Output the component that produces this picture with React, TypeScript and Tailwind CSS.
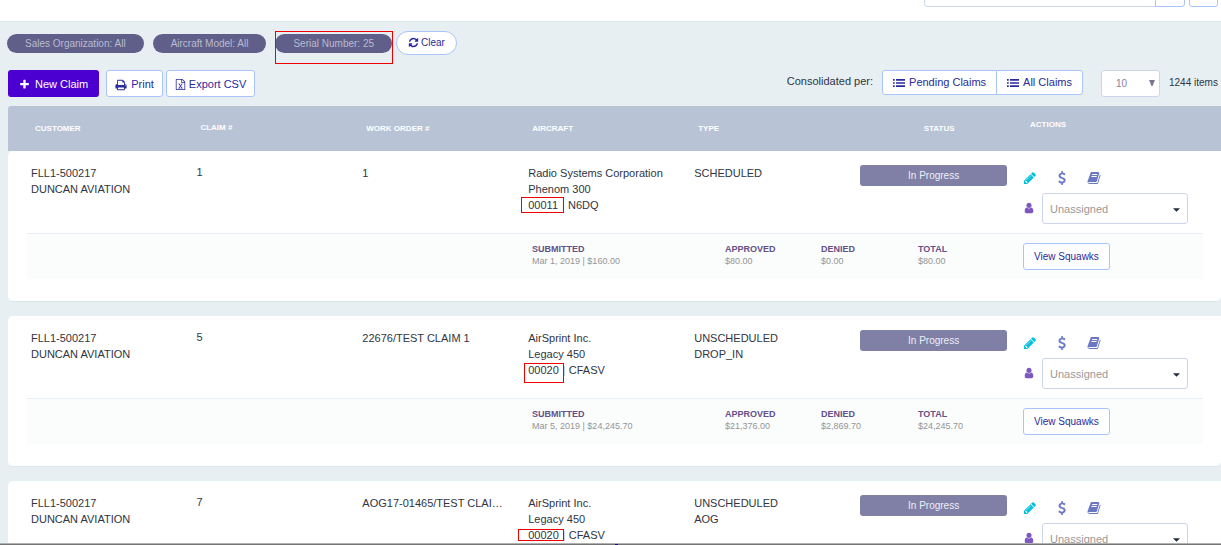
import type { ReactNode } from "react";

const ICONS = {
  plus: "M1600 736v192q0 40-28 68t-68 28h-416v416q0 40-28 68t-68 28h-192q-40 0-68-28t-28-68v-416h-416q-40 0-68-28t-28-68v-192q0-40 28-68t68-28h416v-416q0-40 28-68t68-28h192q40 0 68 28t28 68v416h416q40 0 68 28t28 68z",
  print:
    "M448 1536h896v-256h-896v256zm0-640h896v-384h-160q-40 0-68-28t-28-68v-160h-640v640zm1152 64q0-26-19-45t-45-19-45 19-19 45 19 45 45 19 45-19 19-45zm128 0v416q0 13-9.5 22.5t-22.5 9.5h-224v160q0 40-28 68t-68 28h-960q-40 0-68-28t-28-68v-160h-224q-13 0-22.5-9.5t-9.5-22.5v-416q0-79 56.5-135.5t135.5-56.5h64v-544q0-40 28-68t68-28h672q40 0 88 20t76 48l152 152q28 28 48 76t20 88v256h64q79 0 135.5 56.5t56.5 135.5z",
  refresh:
    "M1639 1056q0 5-1 7-64 268-268 434.5t-478 166.5q-146 0-282.5-55t-243.5-157l-129 129q-19 19-45 19t-45-19-19-45v-448q0-26 19-45t45-19h448q26 0 45 19t19 45-19 45l-137 137q71 66 161 102t187 36q134 0 250-65t186-179q11-17 53-117 8-23 30-23h192q13 0 22.5 9.5t9.5 22.5zm25-800v448q0 26-19 45t-45 19h-448q-26 0-45-19t-19-45 19-45l138-138q-148-137-349-137-134 0-250 65t-186 179q-11 17-53 117-8 23-30 23h-199q-13 0-22.5-9.5t-9.5-22.5v-7q65-268 270-434.5t480-166.5q146 0 284 55.5t245 156.5l130-129q19-19 45-19t45 19 19 45z",
  excel:
    "M1596 380q28 28 48 76t20 88v1152q0 40-28 68t-68 28h-1344q-40 0-68-28t-28-68v-1600q0-40 28-68t68-28h896q40 0 88 20t76 48zm-444-244v376h376q-10-29-22-41l-313-313q-12-12-41-22zm384 1528v-1024h-416q-40 0-68-28t-28-68v-416h-768v1536h1280zm-979-234v106h281v-106h-75l103-161q5-7 10-16.5t7.5-13.5 3.5-4h2q1 4 5 10 2 4 4.5 7.5t6 8 6.5 8.5l107 161h-76v106h291v-106h-68l-192-273 195-282h67v-107h-279v107h74l-103 159q-4 7-10 16.5t-9 13.5l-2 3h-2q-1-4-5-10-6-11-17-23l-106-159h76v-107h-290v107h68l189 272-194 283h-68z",
  list: "M0 288h256v256h-256zM0 768h256v256h-256zM0 1248h256v256h-256zM448 288h1344v256h-1344zM448 768h1344v256h-1344zM448 1248h1344v256h-1344z",
  pencil:
    "M491 1536l91-91-235-235-91 91v107h128v128h107zm523-928q0-22-22-22-10 0-17 7l-542 542q-7 7-7 17 0 22 22 22 10 0 17-7l542-542q7-7 7-17zm-54-192l416 416-832 832h-416v-416zm683 96q0 53-37 90l-166 166-416-416 166-165q36-38 90-38 53 0 91 38l235 234q37 39 37 91z",
  dollar:
    "M1362 1185q0 153-99.5 263.5t-258.5 136.5v175q0 14-9 23t-23 9h-135q-13 0-22.5-9.5t-9.5-22.5v-175q-66-9-127.5-31t-101.5-44.5-74-48-46.5-37.5-17.5-18q-17-21-2-41l103-135q7-10 23-12 15-2 24 9l2 2q113 99 243 125 37 8 74 8 81 0 142.5-43t61.5-122q0-28-15-53t-33.5-42-58.5-37.5-66-32-80-32.5q-39-16-61.5-25t-61.5-26.5-62.5-31-56.5-35.5-53.5-42.5-43.5-49-35.5-58-21-66.5-8.5-78q0-138 98-242t255-134v-180q0-13 9.5-22.5t22.5-9.5h135q14 0 23 9t9 23v176q57 6 110.5 23t87 33.5 63.5 37.5 39 29 15 14q17 18 5 38l-81 146q-8 15-23 16-14 3-27-7-3-3-14.5-12t-39-26.5-58.5-32-74.5-26-85.5-11.5q-95 0-155 43t-60 111q0 26 8.5 48t29.5 41.5 39.5 33 56 31 60.5 27 70 27.5q53 20 81 31.5t76 35 75.5 42.5 62 50 53 63.5 31.5 76.5 13 94z",
  book: "M1703 478q40 57 18 129l-275 906q-19 64-76.5 107.5t-122.5 43.5h-923q-77 0-148.5-53.5t-99.5-131.5q-24-67-2-127 0-4 3-27t4-37q1-8-3-21.5t-3-19.5q2-11 8-21t16.5-23.5 16.5-23.5q23-38 45-91.5t30-91.5q3-10 .5-30t-.5-28q3-11 17-28t17-23q21-36 42-92t25-90q1-9-2.5-32t.5-28q4-13 22-30.5t22-22.5q19-26 42.5-84.5t27.5-96.5q1-8-3-25.5t-2-26.5q2-8 9-18t18-23 17-21q8-12 16.5-30.5t15-35 16-36 19.5-32 26.5-23.5 36-11.5 47.5 5.5l-1 3q38-9 51-9h761q74 0 114 56t18 130l-274 906q-36 119-71.5 153.5t-128.5 34.5h-869q-27 0-38 15-11 16-1 43 24 70 144 70h923q29 0 56-15.5t35-41.5l300-987q7-22 5-57 38 15 59 43zm-1064 2q-4 13 2 22.5t20 9.5h608q13 0 25.5-9.5t16.5-22.5l21-64q4-13-2-22.5t-20-9.5h-608q-13 0-25.5 9.5t-16.5 22.5zm-83 256q-4 13 2 22.5t20 9.5h608q13 0 25.5-9.5t16.5-22.5l21-64q4-13-2-22.5t-20-9.5h-608q-13 0-25.5 9.5t-16.5 22.5z",
  user: "M1536 1399q0 109-62.5 187t-150.5 78h-854q-88 0-150.5-78t-62.5-187q0-85 8.5-160.5t31.5-152 58.5-131 94-89 134.5-34.5q131 128 313 128t313-128q76 0 134.5 34.5t94 89 58.5 131 31.5 152 8.5 160.5zm-256-887q0 159-112.5 271.5t-271.5 112.5-271.5-112.5-112.5-271.5 112.5-271.5 271.5-112.5 271.5 112.5 112.5 271.5z",
};

function Icon({ name, className }: { name: keyof typeof ICONS; className: string }) {
  return (
    <svg viewBox="0 0 1792 1792" fill="currentColor" aria-hidden="true" className={`shrink-0 ${className}`}>
      <path d={ICONS[name]} />
    </svg>
  );
}

interface Claim {
  claim: string;
  workOrder: string;
  operator: string;
  model: string;
  serial: string;
  tail: string;
  type: string[];
  submitted: string;
  approved: string;
  denied: string;
  total: string;
  highlight: string;
}

const claims: Claim[] = [
  {
    claim: "1",
    workOrder: "1",
    operator: "Radio Systems Corporation",
    model: "Phenom 300",
    serial: "00011",
    tail: "N6DQ",
    type: ["SCHEDULED"],
    submitted: "Mar 1, 2019 | $160.00",
    approved: "$80.00",
    denied: "$0.00",
    total: "$80.00",
    highlight: "-left-[7px] top-0 h-4 w-[43px]",
  },
  {
    claim: "5",
    workOrder: "22676/TEST CLAIM 1",
    operator: "AirSprint Inc.",
    model: "Legacy 450",
    serial: "00020",
    tail: "CFASV",
    type: ["UNSCHEDULED", "DROP_IN"],
    submitted: "Mar 5, 2019 | $24,245.70",
    approved: "$21,376.00",
    denied: "$2,869.70",
    total: "$24,245.70",
    highlight: "-left-1 top-px h-5 w-10",
  },
  {
    claim: "7",
    workOrder: "AOG17-01465/TEST CLAIM 2",
    operator: "AirSprint Inc.",
    model: "Legacy 450",
    serial: "00020",
    tail: "CFASV",
    type: ["UNSCHEDULED", "AOG"],
    submitted: "Mar 5, 2019 | $24,245.70",
    approved: "$21,376.00",
    denied: "$2,869.70",
    total: "$24,245.70",
    highlight: "-left-[10px] top-[2px] h-3 w-[46px]",
  },
];

function Pill({ children }: { children: ReactNode }) {
  return (
    <span className="flex h-[19px] items-center rounded-full bg-[#5f5f8a] px-[18px] text-[10px] text-[#b9bbd0]">
      {children}
    </span>
  );
}

const outline = "flex items-center border border-[#a9c4fb] bg-white text-[#2a2a9c]";

function Figure({ label, value }: { label: string; value: string }) {
  return (
    <dl className="pb-1 text-[9px] leading-3">
      <dt className="font-bold text-[#65508a]">{label}</dt>
      <dd className="text-[#949494]">{value}</dd>
    </dl>
  );
}

function ClaimRows({ c }: { c: Claim }) {
  return (
    <tbody>
      <tr className="h-[82px] align-top text-[11px] leading-4 text-[#2f3542] *:bg-white *:px-1 *:pt-[14px]">
        <td className="rounded-tl-[5px] !pl-[23px]">
          FLL1-500217
          <br />
          DUNCAN AVIATION
        </td>
        <td className="!pt-[13px]">{c.claim}</td>
        <td>
          <div className="mr-4 truncate">{c.workOrder}</div>
        </td>
        <td>
          {c.operator}
          <br />
          {c.model}
          <br />
          <span className="flex gap-1">
            <span className="relative">
              {c.serial}
              <span className={`absolute border border-[#f00000] ${c.highlight}`} />
            </span>
            <span>
              <span className="text-[#b9bbc4]">|</span> {c.tail}
            </span>
          </span>
        </td>
        <td>
          {c.type.map((t) => (
            <div key={t}>{t}</div>
          ))}
        </td>
        <td>
          <div className="mr-[11px] flex h-[21px] items-center justify-center rounded-[3px] bg-[#8080a6] text-[10px] text-[#eeeef6]">
            In Progress
          </div>
        </td>
        <td className="!pl-px">
          <div className="flex h-7 items-center pb-[2px] text-[#6a78c4]">
            <button aria-label="Edit claim" className="w-8 text-[#00c2dc]">
              <Icon name="pencil" className="size-[14px]" />
            </button>
            <button aria-label="Payment" className="w-8">
              <Icon name="dollar" className="size-[14px]" />
            </button>
            <button aria-label="Log book">
              <Icon name="book" className="size-[14px]" />
            </button>
          </div>
          <div className="flex h-[31px] items-center">
            <Icon name="user" className="mb-[2px] mr-[7px] size-[12px] text-[#7e57c2]" />
            <div className="relative">
              <select
                aria-label="Assignee"
                className="h-[31px] w-[146px] appearance-none rounded-[3px] border border-[#cdd5ea] bg-white pl-[7px] text-[11px] text-[#999]"
              >
                <option>Unassigned</option>
              </select>
              <svg viewBox="0 0 8 4" className="pointer-events-none absolute right-2 top-[15px] h-1 w-[7px]">
                <path d="M0 0h8L4 4z" fill="#222b3a" />
              </svg>
            </div>
          </div>
        </td>
      </tr>
      <tr>
        <td colSpan={7} className="rounded-b-[5px] border-b border-[#dbe6ea] bg-white pb-[22px] pl-[19px] pr-[18px]">
          <div className="grid h-[46px] grid-cols-[505fr_193fr_96fr_97fr_105fr_180fr] items-center border-t border-[#e6edf6] bg-[#fbfdfd]">
            <span />
            <Figure label="SUBMITTED" value={c.submitted} />
            <Figure label="APPROVED" value={c.approved} />
            <Figure label="DENIED" value={c.denied} />
            <Figure label="TOTAL" value={c.total} />
            <button className={`${outline} h-[27px] justify-self-start rounded-[3px] px-[10px] text-[10px]`}>
              View Squawks
            </button>
          </div>
        </td>
      </tr>
      <tr aria-hidden="true">
        <td colSpan={7} className="h-[14px] p-0" />
      </tr>
    </tbody>
  );
}

export default function App() {
  return (
    <div className="flex h-screen flex-col overflow-hidden bg-[#e7eff3] font-['Liberation_Sans',Arial,sans-serif]">
      <header className="flex h-[22px] shrink-0 items-end justify-end overflow-hidden border-b border-[#dce8ec] bg-white pb-[14px] pr-[3px]">
        <input aria-label="Search" className="h-[30px] w-[232px] rounded-l-[3px] border border-[#cdd5ea]" />
        <button aria-label="Search" className="-ml-px mr-1 h-[30px] w-[30px] rounded-r-[3px] border border-[#a9c4fb]" />
        <button aria-label="Options" className="h-[30px] w-[29px] rounded-[3px] border border-[#a9c4fb]" />
      </header>

      <main className="min-h-0 flex-1 overflow-hidden pl-2 pt-[9px]">
        <div className="-ml-px flex h-6 items-center gap-[9px]">
          <Pill>Sales Organization: All</Pill>
          <Pill>Aircraft Model: All</Pill>
          <div className="relative">
            <Pill>Serial Number: 25</Pill>
            <span className="absolute -right-px -top-[3px] left-0 h-[33px] border border-[#f00000]" />
          </div>
          <button className={`${outline} -ml-[5px] h-6 gap-[2px] self-start rounded-full px-[11px] pb-[2px] text-[10px]`}>
            <Icon name="refresh" className="size-[11px]" />
            Clear
          </button>
        </div>

        <div className="mt-[15px] flex items-start justify-between whitespace-nowrap text-[11px]">
          <div className="flex">
            <button className="mr-[7px] flex h-[27px] items-center gap-[5px] rounded-[3px] bg-[#4b00d1] px-[11px] pt-[2px] text-white">
              <Icon name="plus" className="size-[11px]" />
              New Claim
            </button>
            <button className={`${outline} mr-[3px] h-[27px] gap-1 rounded-[3px] px-2 pt-[2px]`}>
              <Icon name="print" className="size-3" />
              Print
            </button>
            <button className={`${outline} h-[27px] gap-[3px] rounded-[3px] px-2 pt-[2px]`}>
              <Icon name="excel" className="size-[11px]" />
              Export CSV
            </button>
          </div>
          <div className="flex items-start text-[#2f3542]">
            <span className="mr-[9px] leading-[23px]">Consolidated per:</span>
            <button className={`${outline} h-[25px] gap-1 rounded-l-[3px] px-[10px]`}>
              <Icon name="list" className="size-3" />
              Pending Claims
            </button>
            <button className={`${outline} -ml-px mr-[18px] h-[25px] gap-1 rounded-r-[3px] px-[10px]`}>
              <Icon name="list" className="size-3" />
              All Claims
            </button>
            <div className="relative mr-[9px]">
              <select
                aria-label="Items per page"
                className="h-[27px] w-[59px] appearance-none rounded-[3px] border border-[#cdd5ea] bg-white pl-[14px] text-[10px] text-[#83839a]"
              >
                <option>10</option>
              </select>
              <svg viewBox="0 0 6 6" className="pointer-events-none absolute right-[5px] top-[10px] size-[6px]">
                <path d="M0 0h6L3.5 6h-1z" fill="#77778f" />
              </svg>
            </div>
            <span className="w-[52px] text-[10px] leading-[25px]">1244 items</span>
          </div>
        </div>

        <table className="mt-[9px] w-full table-fixed border-separate border-spacing-0">
          <colgroup>
            <col className="w-[15.2%]" />
            <col className="w-[13.68%]" />
            <col className="w-[13.68%]" />
            <col className="w-[13.68%]" />
            <col className="w-[13.68%]" />
            <col className="w-[13.68%]" />
            <col />
          </colgroup>
          <thead>
            <tr className="h-[45px] text-left text-[8px] text-white *:bg-[#b8c3d6] *:px-2 *:py-0">
              <th className="rounded-tl-[3px] !pl-[27px]">CUSTOMER</th>
              <th className="!pb-[2px]">CLAIM #</th>
              <th>WORK ORDER #</th>
              <th>AIRCRAFT</th>
              <th>TYPE</th>
              <th className="text-center">STATUS</th>
              <th className="!pb-2">ACTIONS</th>
            </tr>
          </thead>
          {claims.map((c) => (
            <ClaimRows key={c.claim} c={c} />
          ))}
        </table>
      </main>

      <footer className="flex h-[2px] shrink-0 justify-center border-t border-[#b0b0b0] bg-[#757575]">
        <span className="ml-[11px] h-px w-[3px] bg-[#1c0a9c]" />
      </footer>
    </div>
  );
}
